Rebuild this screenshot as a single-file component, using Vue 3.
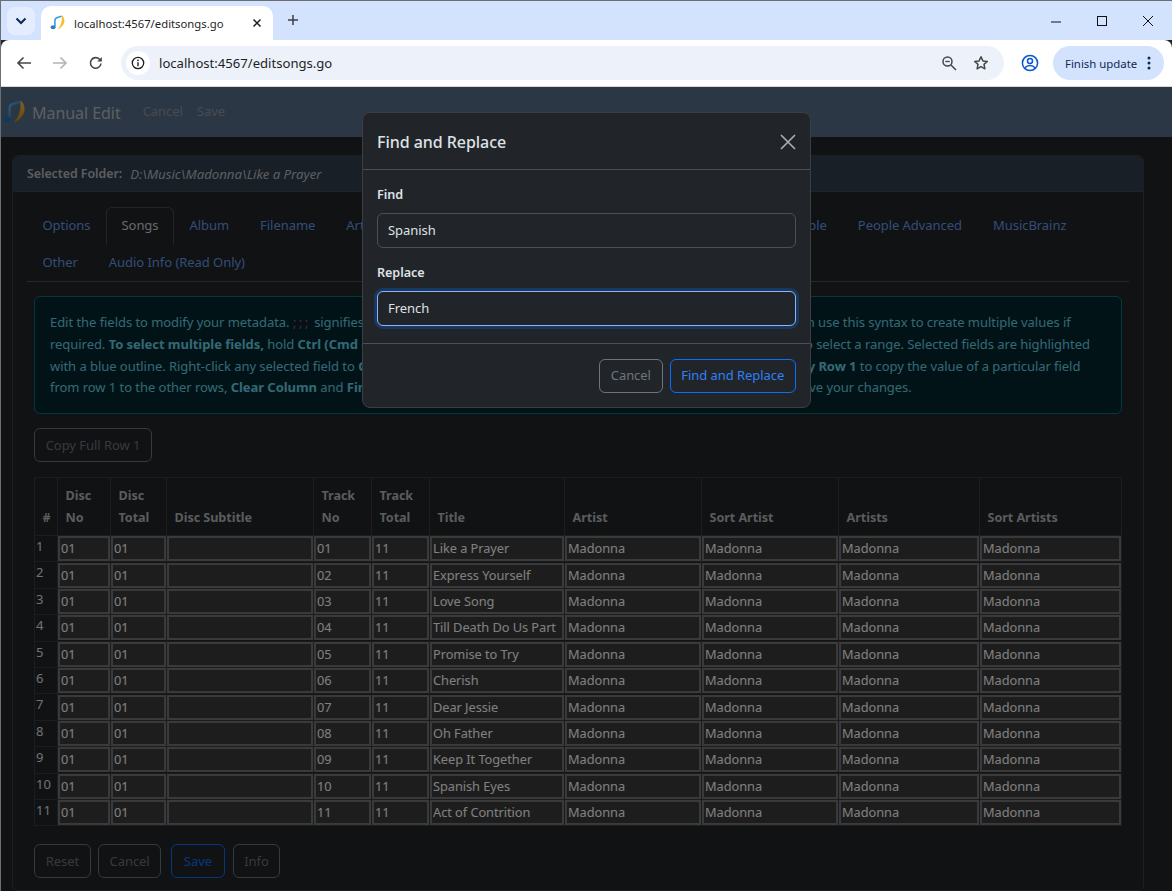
<script setup>
const cols = [
  { key: 'discNo', label: ['Disc', 'No'], w: 53 },
  { key: 'discTotal', label: ['Disc', 'Total'], w: 56 },
  { key: 'sub', label: ['Disc Subtitle'], w: 147 },
  { key: 'trackNo', label: ['Track', 'No'], w: 58 },
  { key: 'trackTotal', label: ['Track', 'Total'], w: 58 },
  { key: 'title', label: ['Title'], w: 135 },
  { key: 'artist', label: ['Artist'], w: 137 },
  { key: 'sortArtist', label: ['Sort Artist'], w: 137 },
  { key: 'artists', label: ['Artists'], w: 141 },
  { key: 'sortArtists', label: ['Sort Artists'], w: 142 },
]
const titles = ['Like a Prayer', 'Express Yourself', 'Love Song', 'Till Death Do Us Part', 'Promise to Try', 'Cherish', 'Dear Jessie', 'Oh Father', 'Keep It Together', 'Spanish Eyes', 'Act of Contrition']
const rows = titles.map((title, i) => ({
  discNo: '01', discTotal: '01', sub: '',
  trackNo: String(i + 1).padStart(2, '0'), trackTotal: '11', title,
  artist: 'Madonna', sortArtist: 'Madonna', artists: 'Madonna', sortArtists: 'Madonna',
}))
const tabs = ['Options', 'Songs', 'Album', 'Filename', 'Artwork', 'Lyrics', 'Comment', 'Sort Tags', 'Classifications', 'People', 'People Advanced', 'MusicBrainz', 'Other', 'Audio Info (Read Only)']
</script>

<template>
  <div class="window">
    <div class="tabstrip">
      <button class="tabsearch">
        <svg width="12" height="8" viewBox="0 0 12 8"><path d="M1.5 1.5 6 6l4.5-4.5" fill="none" stroke="#0b2a55" stroke-width="2"/></svg>
      </button>
      <div class="tab">
        <svg class="favicon" width="16" height="16" viewBox="0 0 26 26">
          <path d="M8 19V8c0-3 2-4 11-6" fill="none" stroke="#3b9fe0" stroke-width="2.600"/>
          <path d="M20 1c6 7 5 16-8 23 6-7 8-14 7-23z" fill="#f5c02c"/>
          <ellipse cx="5" cy="20" rx="4" ry="3.200" fill="#2a7fc4"/>
        </svg>
        <span class="tabtitle">localhost:4567/editsongs.go</span>
        <svg width="10" height="10" viewBox="0 0 10 10"><path d="M1.5 1.5l7 7m0-7l-7 7" stroke="#1f1f1f" stroke-width="1.5"/></svg>
      </div>
      <svg class="newtab" width="12" height="12" viewBox="0 0 12 12"><path d="M6 1v10M1 6h10" stroke="#3c4043" stroke-width="1.5"/></svg>
      <div class="winbtns">
        <svg width="12" height="12" viewBox="0 0 12 12"><path d="M1 7h10" stroke="#111" stroke-width="1"/></svg>
        <svg width="12" height="12" viewBox="0 0 12 12"><rect x="1.5" y="1.5" width="9" height="9" fill="none" stroke="#111" stroke-width="1"/></svg>
        <svg width="12" height="12" viewBox="0 0 12 12"><path d="M1 1l10 10M11 1L1 11" stroke="#111" stroke-width="1"/></svg>
      </div>
    </div>
    <div class="toolbar">
      <svg class="navicon" width="16" height="14" viewBox="0 0 16 14"><path d="M15 7H2M7.5 1.5 2 7l5.5 5.5" fill="none" stroke="#474747" stroke-width="1.6"/></svg>
      <svg class="navicon" width="16" height="14" viewBox="0 0 16 14"><path d="M1 7h13M8.500 1.500 14 7l-5.500 5.500" fill="none" stroke="#b3b3b3" stroke-width="1.600"/></svg>
      <svg class="navicon" width="16" height="16" viewBox="0 0 16 16"><path d="M13 8.500A5.300 5.300 0 1 1 11.500 4.200L13.300 6" fill="none" stroke="#474747" stroke-width="1.600"/><path d="M13.800 2v4.600H9.200z" fill="#474747"/></svg>
      <div class="omnibox">
        <span class="siteinfo">
          <svg width="14" height="14" viewBox="0 0 14 14"><circle cx="7" cy="7" r="5.700" fill="none" stroke="#1f1f1f" stroke-width="1.300"/><path d="M7 6.200v4" stroke="#1f1f1f" stroke-width="1.400"/><circle cx="7" cy="4.300" r=".9" fill="#1f1f1f"/></svg>
        </span>
        <span class="url">localhost:4567/editsongs.go</span>
        <svg class="zoomicon" width="16" height="16" viewBox="0 0 16 16"><circle cx="6.500" cy="6.500" r="4.500" fill="none" stroke="#474747" stroke-width="1.500"/><path d="M10 10l5 5" stroke="#474747" stroke-width="1.500"/><path d="M4.300 6.500h4.400" stroke="#474747" stroke-width="1.300"/></svg>
        <svg class="star" width="16" height="16" viewBox="0 0 16 16"><path d="M8 1.800l1.900 4.100 4.400.5-3.300 3 .9 4.400L8 11.600l-3.900 2.200.9-4.400-3.300-3 4.400-.5z" fill="none" stroke="#474747" stroke-width="1.500" stroke-linejoin="round"/></svg>
      </div>
      <svg class="profile" width="18" height="18" viewBox="0 0 18 18"><circle cx="9" cy="9" r="7.600" fill="none" stroke="#0b57d0" stroke-width="1.500"/><circle cx="9" cy="7" r="2.500" fill="none" stroke="#0b57d0" stroke-width="1.500"/><path d="M3.800 14c1.500-2 3.300-2.600 5.200-2.600s3.700.6 5.200 2.600" fill="none" stroke="#0b57d0" stroke-width="1.500"/></svg>
      <div class="update">
        <span>Finish update</span>
        <svg width="4" height="14" viewBox="0 0 4 14"><circle cx="2" cy="2" r="1.500" fill="#0b2a55"/><circle cx="2" cy="7" r="1.500" fill="#0b2a55"/><circle cx="2" cy="12" r="1.500" fill="#0b2a55"/></svg>
      </div>
    </div>

    <div class="page">
      <nav class="appnav">
        <svg class="logo" width="25" height="25" viewBox="0 0 26 26">
          <defs>
            <linearGradient id="gold" x1="0" y1="0" x2="0" y2="1"><stop offset="0" stop-color="#f7c948"/><stop offset="1" stop-color="#c98a10"/></linearGradient>
            <linearGradient id="blue" x1="0" y1="0" x2="1" y2="1"><stop offset="0" stop-color="#58b8f0"/><stop offset="1" stop-color="#1f6fb0"/></linearGradient>
          </defs>
          <path d="M8 19V8c0-3 2-4 11-6" fill="none" stroke="url(#blue)" stroke-width="2.600"/>
          <path d="M20 1c6 7 5 16-8 23 6-7 8-14 7-23z" fill="url(#gold)"/>
          <ellipse cx="5" cy="20" rx="4" ry="3.200" fill="#2272b4"/>
        </svg>
        <span class="brand">Manual Edit</span>
        <a class="navlink">Cancel</a>
        <a class="navlink">Save</a>
      </nav>

      <main class="content">
        <section class="card">
          <header class="cardhead"><b>Selected Folder:</b> <i>D:\Music\Madonna\Like a Prayer</i></header>
          <div class="cardbody">
            <ul class="tabs">
              <li v-for="t in tabs" :key="t" :class="{ active: t === 'Songs' }">{{ t }}</li>
            </ul>
            <div class="pane">
              <div class="alert">
                Edit the fields to modify your metadata. <code>;;;</code> signifies that a field has multiple values in the file tag, and so when editing you can use this syntax to create multiple values if<br>
                required. <b>To select multiple fields,</b> hold <b>Ctrl (Cmd on Mac)</b> and click on the individual fields you like, or hold <b>Shift</b> and click to select a range. Selected fields are highlighted<br>
                with a blue outline. Right-click any selected field to <b>Copy</b>, <b>Paste</b> or <b>Clear</b> all those values. Use the column header buttons <b>Copy Row 1</b> to copy the value of a particular field<br>
                from row 1 to the other rows, <b>Clear Column</b> and <b>Find and Replace</b> to edit the whole column of fields at once. Click <b>Save</b> to save your changes.
              </div>
              <button class="btn ghost copy">Copy Full Row 1</button>
              <table class="grid">
                <colgroup>
                  <col style="width: 23px">
                  <col v-for="c in cols" :key="c.key" :style="{ width: c.w + 'px' }">
                </colgroup>
                <thead>
                  <tr>
                    <th class="num">#</th>
                    <th v-for="c in cols" :key="c.key">
                      <span v-for="l in c.label" :key="l" class="hline">{{ l }}</span>
                    </th>
                  </tr>
                </thead>
                <tbody>
                  <tr v-for="(r, i) in rows" :key="i">
                    <td class="idx">{{ i + 1 }}</td>
                    <td v-for="c in cols" :key="c.key"><input :value="r[c.key]" readonly></td>
                  </tr>
                </tbody>
              </table>
              <div class="actions">
                <button class="btn ghost">Reset</button>
                <button class="btn ghost">Cancel</button>
                <button class="btn primary save">Save</button>
                <button class="btn ghost">Info</button>
              </div>
            </div>
          </div>
        </section>
      </main>

      <div class="backdrop"></div>
      <div class="modalwrap">
        <div class="modal">
          <div class="mhead">
            <span class="mtitle">Find and Replace</span>
            <svg width="16" height="16" viewBox="0 0 16 16"><path d="M1 1l14 14M15 1L1 15" stroke="#a9abad" stroke-width="1.700"/></svg>
          </div>
          <div class="mbody">
            <label>Find</label>
            <input class="field" value="Spanish" readonly>
            <label class="second">Replace</label>
            <input class="field focus" value="French" readonly>
          </div>
          <div class="mfoot">
            <button class="btn mcancel">Cancel</button>
            <button class="btn mprimary">Find and Replace</button>
          </div>
        </div>
      </div>
    </div>
  </div>
</template>

<style>
html, body { margin: 0; overflow: hidden; background: #212529; }
</style>

<style scoped>
.window {
  width: 1172px; height: 891px; display: flex; flex-direction: column; overflow: hidden;
  font-family: "Noto Sans", sans-serif; font-size: 13px; box-sizing: border-box;
  border-top: 1px solid #6b6f75; border-left: 1px solid #6b6f75;
}
.tabstrip { height: 39px; background: #d3e3fd; display: flex; align-items: flex-end; flex: none; }
.tabsearch { width: 28px; height: 28px; margin: 0 6px 5px 6px; border: 0; border-radius: 8px; background: #e3edfd; display: flex; align-items: center; justify-content: center; padding: 0; }
.tab { width: 232px; height: 34px; background: #fff; border-radius: 10px 10px 0 0; display: flex; align-items: center; padding: 0 11px 0 9px; box-sizing: border-box; }
.tabtitle { flex: 1; font-size: 11.3px; color: #1f1f1f; margin-left: 8px; }
.favicon { flex: none; }
.newtab { margin: 0 0 14px 14px; }
.winbtns { margin-left: auto; display: flex; gap: 34px; padding: 0 18px 13px 0; }
.toolbar { background: #fff; border-bottom: 1px solid #d7d7d7; flex: none; display: flex; align-items: center; padding: 0 7px 0 15px; box-sizing: border-box; height: 47px; border-radius: 8px 8px 0 0; }
.navicon { margin-right: 20px; flex: none; }
.navicon:nth-of-type(3) { margin-right: 17px; }
.omnibox { width: 883px; height: 34px; border-radius: 17px; background: #edf2fa; display: flex; align-items: center; padding: 0 15px 0 5px; box-sizing: border-box; }
.siteinfo { width: 24px; height: 24px; border-radius: 50%; background: #fff; display: flex; align-items: center; justify-content: center; flex: none; }
.url { margin-left: 9px; font-size: 13.1px; color: #1f1f1f; flex: 1; }
.zoomicon { margin-right: 16px; }
.profile { margin-left: 17px; flex: none; }
.update { margin-left: 14px; width: 111px; height: 34px; border-radius: 17px; background: #d3e3fd; display: flex; align-items: center; justify-content: space-between; padding: 0 13px 0 12px; box-sizing: border-box; color: #0b2a55; font-size: 11.4px; flex: none; }

.page { position: relative; flex: 1; min-height: 0; background: #212529; color: #dee2e6; overflow: hidden; font-size: 13px; letter-spacing: -.05px; }
.appnav { height: 50px; background: #586e8c; display: flex; align-items: center; box-sizing: border-box; }
.logo { margin-left: 1px; flex: none; }
.brand { font-size: 16px; margin: 2px 22px 0 5px; color: #b9bec4; }
.navlink { margin-right: 14px; color: #9096a0; margin-top: -3px; }

.content { padding: 18px 28px 0 11px; }
.card { border: 1px solid #394048; border-radius: 6px; height: 736px; box-sizing: border-box; }
.cardhead { height: 36px; background: #323e4c; border-bottom: 1px solid #41484f; display: flex; align-items: center; padding: 0 14px; gap: 8px; color: #b9bdc1; border-radius: 6px 6px 0 0; box-sizing: border-box; font-size: 13.3px; }
.cardhead b { font-weight: 600; font-size: 12.4px; }
.cardbody { padding: 15px 14px 0; }
.tabs { list-style: none; margin: 0; padding: 0 40px 0 0; display: flex; flex-wrap: wrap; border-bottom: 1px solid #495057; height: 75px; align-content: flex-start; box-sizing: border-box; }
.tabs li { padding: 0 14.500px 2px; height: 37px; display: flex; align-items: center; color: #6ea8fe; box-sizing: border-box; border: 1px solid transparent; border-bottom: 0; opacity: .9; }
.tabs li.active { color: #dee2e6; border-color: #495057; border-radius: 6px 6px 0 0; }
.pane { padding: 14px 7px 0; }
.alert { height: 118px; box-sizing: border-box; border: 1px solid #087990; border-radius: 6px; background: #032830; color: #6edff6; padding: 15px; line-height: 21.8px; white-space: nowrap; overflow: hidden; opacity: .93; }
.alert b { font-weight: 700; }
.alert code { font-family: inherit; color: #d63384; letter-spacing: 2.500px; }
.btn { font-family: inherit; font-size: 13px; letter-spacing: inherit; height: 34px; padding: 0 10.700px 1px; border-radius: 6px; background: transparent; box-sizing: border-box; }
.ghost { border: 1px solid #6c757d; color: #6c757d; }
.primary { border: 1px solid #0d6efd; color: #0d6efd; }
.copy { display: block; margin: 14px 0 15px; }
.grid { border-collapse: collapse; table-layout: fixed; width: 1087px; }
.grid th { border: 1px solid #373b3e; padding: 6px 7px 6px 7.500px; text-align: left; vertical-align: bottom; font-size: 12.6px; font-weight: 700; color: #b5b8bc; line-height: 22px; height: 58px; box-sizing: border-box; }
.hline { display: block; }
.grid td { border: 1px solid #373b3e; padding: 0; height: 26.400px; vertical-align: middle; box-sizing: border-box; }
.grid td.idx { padding: 0 0 0 1px; vertical-align: top; color: #dee2e6; line-height: 20px; }
.grid input { display: block; width: 100%; height: 25px; margin: 0; box-sizing: border-box; border: 2px solid #747474; background: #3b3b3b; color: #fff; font-family: inherit; font-size: 12.8px; letter-spacing: inherit; padding: 0 1px 1px; outline: 0; }
.actions { display: flex; gap: 7px; margin-top: 18px; }
.save { margin: 0 1px 0 3px; padding: 0 11.500px 1px; }

.backdrop { position: absolute; inset: 0; background: rgba(0, 0, 0, .5); }
.modalwrap { position: absolute; inset: 0; display: flex; justify-content: center; align-items: flex-start; padding: 25px 0 0 0; }
.modal { width: 449px; height: 296px; background: #212529; border: 1px solid #3b3f43; border-radius: 8px; box-sizing: border-box; display: flex; flex-direction: column; color: #dee2e6; }
.mhead { height: 57px; flex: none; display: flex; align-items: center; justify-content: space-between; padding: 1px 14px 0; border-bottom: 1px solid #495057; box-sizing: border-box; }
.mtitle { font-size: 16px; font-weight: 500; }
.mbody { flex: 1; padding: 16px 14px 0; display: flex; flex-direction: column; }
.mbody label { font-weight: 600; font-size: 12.6px; line-height: 18px; margin-bottom: 9px; }
.mbody label.second { margin-top: 16px; margin-bottom: 9px; }
.field { height: 35px; border: 1px solid #495057; border-radius: 6px; background: #212529; color: #dee2e6; font-family: inherit; font-size: 13px; letter-spacing: inherit; padding: 0 10px 2px; box-sizing: border-box; outline: 0; flex: none; }
.field.focus { border-color: #86b7fe; box-shadow: 0 0 0 3px rgba(13, 110, 253, .25); }
.mfoot { height: 64px; flex: none; border-top: 1px solid #495057; display: flex; justify-content: flex-end; align-items: center; gap: 7px; padding: 0 14px; box-sizing: border-box; }
.mcancel { border: 1px solid #6c757d; color: #6c757d; }
.mprimary { border: 1px solid #0d6efd; color: #2f80f7; }
</style>
